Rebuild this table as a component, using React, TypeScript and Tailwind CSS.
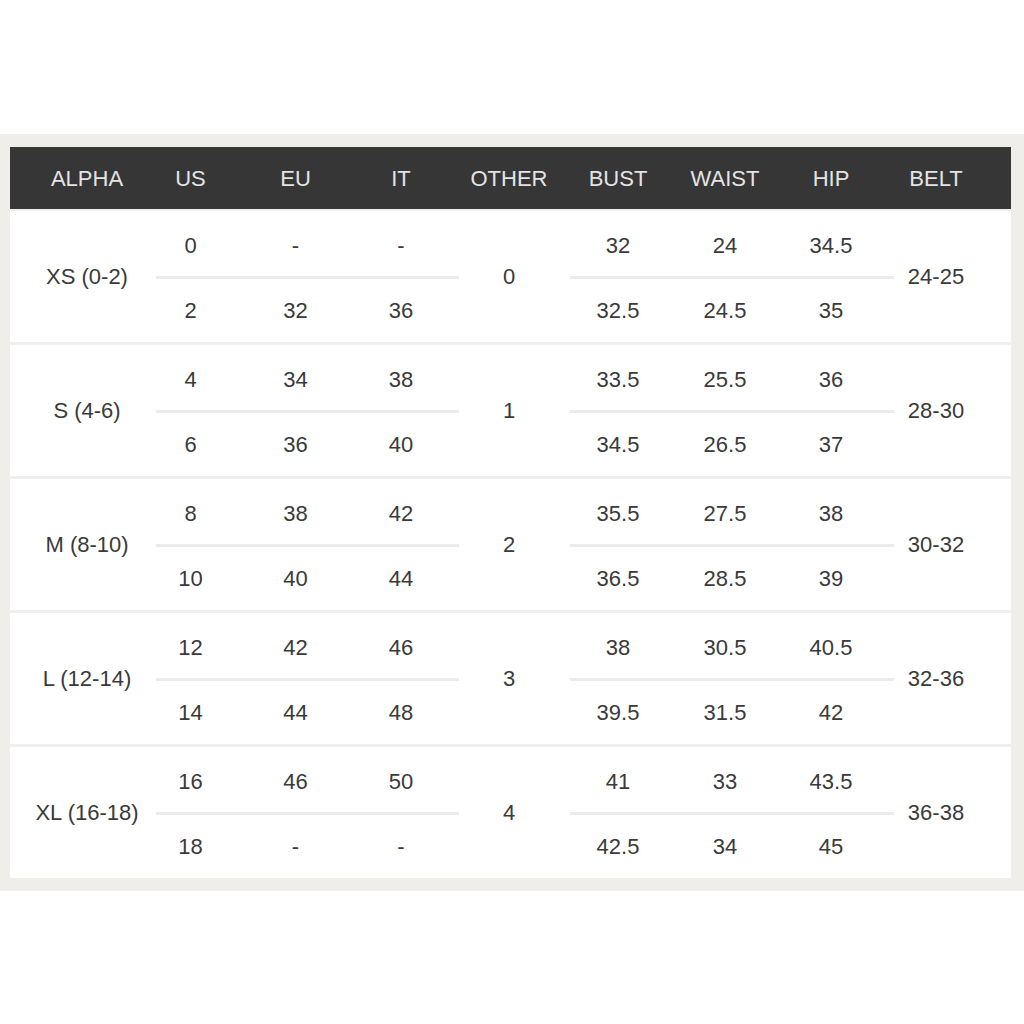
const headers = ["ALPHA", "US", "EU", "IT", "OTHER", "BUST", "WAIST", "HIP", "BELT"]

type SizeRow = {
  alpha: string
  top: string[]
  bottom: string[]
  other: string
  bodyTop: string[]
  bodyBottom: string[]
  belt: string
}

const rows: SizeRow[] = [
  { alpha: "XS (0-2)", top: ["0", "-", "-"], bottom: ["2", "32", "36"], other: "0", bodyTop: ["32", "24", "34.5"], bodyBottom: ["32.5", "24.5", "35"], belt: "24-25" },
  { alpha: "S (4-6)", top: ["4", "34", "38"], bottom: ["6", "36", "40"], other: "1", bodyTop: ["33.5", "25.5", "36"], bodyBottom: ["34.5", "26.5", "37"], belt: "28-30" },
  { alpha: "M (8-10)", top: ["8", "38", "42"], bottom: ["10", "40", "44"], other: "2", bodyTop: ["35.5", "27.5", "38"], bodyBottom: ["36.5", "28.5", "39"], belt: "30-32" },
  { alpha: "L (12-14)", top: ["12", "42", "46"], bottom: ["14", "44", "48"], other: "3", bodyTop: ["38", "30.5", "40.5"], bodyBottom: ["39.5", "31.5", "42"], belt: "32-36" },
  { alpha: "XL (16-18)", top: ["16", "46", "50"], bottom: ["18", "-", "-"], other: "4", bodyTop: ["41", "33", "43.5"], bodyBottom: ["42.5", "34", "45"], belt: "36-38" },
]

const cols = "grid grid-cols-[128px_105px_105px_106px_110px_108px_106px_106px_127px]"

function SizeBlock({ row }: { row: SizeRow }) {
  return (
    <div className={`${cols} grid-rows-[65px_3px_63px] h-[131px] bg-white text-[22px] text-[#3a3a3a] whitespace-nowrap`}>
      <div className="row-span-3 flex items-center justify-center pl-[26px]">{row.alpha}</div>
      {row.top.map((v, i) => (
        <div key={"t" + i} className="flex items-center justify-center pt-[3px]">{v}</div>
      ))}
      <div className="row-span-3 flex items-center justify-center">{row.other}</div>
      {row.bodyTop.map((v, i) => (
        <div key={"bt" + i} className="flex items-center justify-center pt-[3px]">{v}</div>
      ))}
      <div className="row-span-3 flex items-center justify-center pr-[23px]">{row.belt}</div>

      <div className="col-start-2 col-span-3 ml-[18px] mr-[-5px] bg-[#ebebeb]" />
      <div className="col-start-6 col-span-3 ml-[6px] mr-[-10px] bg-[#ebebeb]" />

      {row.bottom.map((v, i) => (
        <div key={"b" + i} className={`flex items-center justify-center ${i === 0 ? "col-start-2" : ""}`}>{v}</div>
      ))}
      {row.bodyBottom.map((v, i) => (
        <div key={"bb" + i} className={`flex items-center justify-center ${i === 0 ? "col-start-6" : ""}`}>{v}</div>
      ))}
    </div>
  )
}

export default function App() {
  return (
    <div className="w-[1024px] h-[1024px] bg-white font-['Liberation_Sans',Arial,sans-serif]">
      <div className="h-[134px]" />
      <div className="bg-[#efeeea] pt-[13px] pb-[13px] pl-[10px] pr-[13px]">
        <div className="flex flex-col gap-[3px] bg-[#efefed]">
          <div className={`${cols} h-[62px] items-center bg-[#363636] text-[22px] text-[#e4e4e4] mb-[-1px]`}>
            {headers.map((h, i) => (
              <div key={h} className={`text-center ${i === 0 ? "pl-[26px]" : ""} ${i === 8 ? "pr-[23px]" : ""}`}>{h}</div>
            ))}
          </div>
          {rows.map((r) => (
            <SizeBlock key={r.alpha} row={r} />
          ))}
        </div>
      </div>
    </div>
  )
}
